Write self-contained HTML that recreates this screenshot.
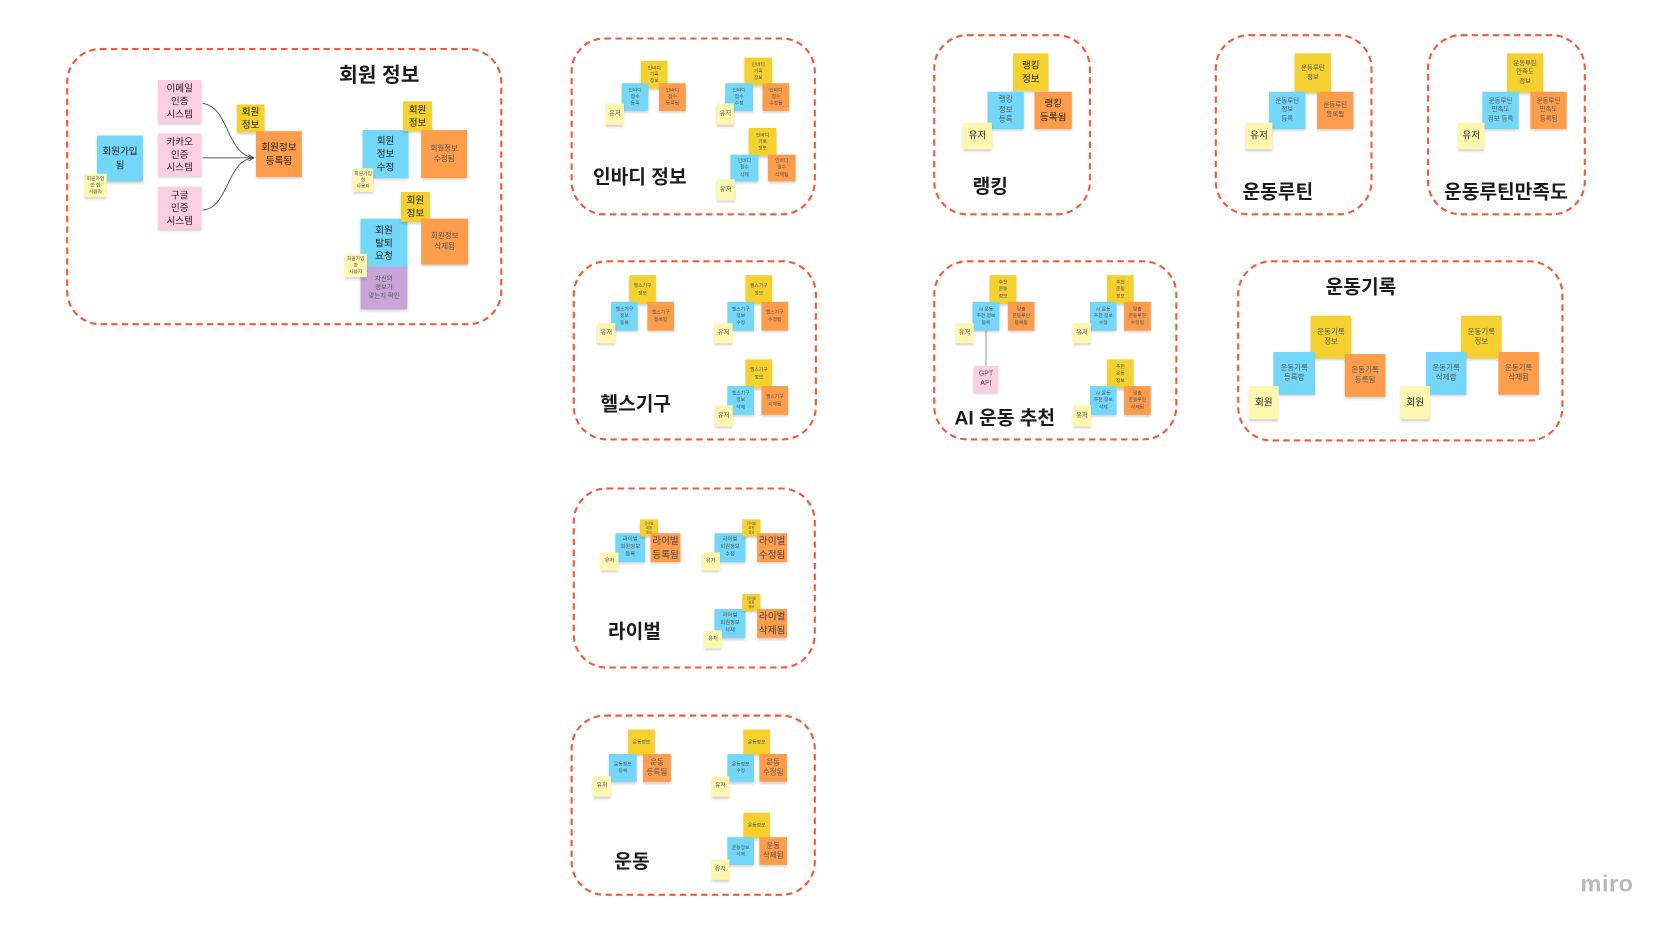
<!DOCTYPE html>
<html><head><meta charset="utf-8">
<style>
html,body{margin:0;padding:0;background:#fff;width:1673px;height:933px;overflow:hidden}
#w{position:absolute;left:0;top:0;width:1560px;height:870px;transform:scale(1.0665);transform-origin:0 0;font-family:"Liberation Sans","Noto Sans CJK KR",sans-serif}
.f{position:absolute;border:2px dashed #f25a3c;border-radius:32px;box-sizing:border-box}
.t{position:absolute;font-weight:bold;color:#1a1a1a;white-space:nowrap;font-size:18px}
.s{position:absolute;display:flex;align-items:center;justify-content:center;text-align:center;font-size:4.5px;line-height:1.35;color:#555;box-shadow:0 2px 2px rgba(0,0,0,.18);box-sizing:border-box;overflow:hidden}
.y{background:#f4d12f}.b{background:#72d7f8}.o{background:#fd9d4b}.p{background:#fdcde0}.l{background:#fff7b0}.v{background:#c9a5d7}
.m{font-size:9px;color:#222}.n{font-size:7px;color:#555}
</style></head><body><div id="w">

<!-- 회원 정보 -->
<div class="f" style="left:62px;top:45px;width:409px;height:260px"></div>
<div class="t" style="left:318px;top:56px;font-size:19px">회원 정보</div>
<svg style="position:absolute;left:0;top:0" width="560" height="340"><g fill="none" stroke="#444" stroke-width="0.8">
<path d="M190 97 C215 100,212 145,238 148"/><path d="M190 148 L238 148"/><path d="M190 197 C215 195,212 150,238 148"/><path d="M233 145 L238 148 L233 151"/></g></svg>
<div class="s p m" style="left:148px;top:75px;width:41px;height:40px">이메일<br>인증<br>시스템</div>
<div class="s p m" style="left:148px;top:125px;width:41px;height:40px">카카오<br>인증<br>시스템</div>
<div class="s p m" style="left:148px;top:175px;width:41px;height:40px">구글<br>인증<br>시스템</div>
<div class="s b m" style="left:91px;top:127px;width:43px;height:43px">회원가입<br>됨</div>
<div class="s l" style="left:79px;top:163px;width:21px;height:22px">회원가입<br>안 한<br>사용자</div>
<div class="s y m" style="left:222px;top:98px;width:26px;height:26px">회원<br>정보</div>
<div class="s o m" style="left:240px;top:123px;width:43px;height:43px">회원정보<br>등록됨</div>
<div class="s b m" style="left:340px;top:122px;width:43px;height:45px">회원<br>정보<br>수정</div>
<div class="s y m" style="left:378px;top:95px;width:27px;height:28px">회원<br>정보</div>
<div class="s o n" style="left:395px;top:122px;width:43px;height:45px">회원정보<br>수정됨</div>
<div class="s l" style="left:331px;top:158px;width:19px;height:22px">회원가입<br>한<br>사용자</div>
<div class="s b m" style="left:338px;top:205px;width:44px;height:46px">회원<br>탈퇴<br>요청</div>
<div class="s y m" style="left:376px;top:180px;width:27px;height:28px">회원<br>정보</div>
<div class="s v n" style="left:338px;top:250px;width:44px;height:40px;font-size:6px">자신의<br>정보가<br>맞는지 확인</div>
<div class="s o n" style="left:395px;top:205px;width:44px;height:43px">회원정보<br>삭제됨</div>
<div class="s l" style="left:323px;top:238px;width:21px;height:22px">회원가입<br>한<br>사용자</div>

<!-- 인바디 -->
<div class="f" style="left:535px;top:35px;width:230px;height:167px"></div>
<div class="t" style="left:556px;top:152px">인바디 정보</div>
<div class="s y" style="left:601px;top:57px;width:25px;height:26px">인바디<br>기록<br>정보</div>
<div class="s b" style="left:583px;top:78px;width:25px;height:26px">인바디<br>점수<br>등록</div>
<div class="s o" style="left:618px;top:78px;width:25px;height:26px">인바디<br>점수<br>등록됨</div>
<div class="s l n" style="left:568px;top:97px;width:17px;height:20px;font-size:6px">유저</div>
<div class="s y" style="left:698px;top:54px;width:26px;height:26px">인바디<br>기록<br>정보</div>
<div class="s b" style="left:680px;top:78px;width:26px;height:26px">인바디<br>점수<br>수정</div>
<div class="s o" style="left:715px;top:78px;width:25px;height:26px">인바디<br>점수<br>수정됨</div>
<div class="s l n" style="left:672px;top:97px;width:16px;height:20px;font-size:6px">유저</div>
<div class="s y" style="left:702px;top:120px;width:26px;height:26px">인바디<br>기록<br>정보</div>
<div class="s b" style="left:685px;top:145px;width:26px;height:25px">인바디<br>점수<br>삭제</div>
<div class="s o" style="left:720px;top:145px;width:26px;height:25px">인바디<br>점수<br>삭제됨</div>
<div class="s l n" style="left:672px;top:168px;width:17px;height:20px;font-size:6px">유저</div>

<!-- 랭킹 -->
<div class="f" style="left:875px;top:32px;width:148px;height:170px"></div>
<div class="t" style="left:912px;top:161px">랭킹</div>
<div class="s y m" style="left:950px;top:50px;width:33px;height:35px">랭킹<br>정보</div>
<div class="s b n" style="left:926px;top:86px;width:34px;height:35px">랭킹<br>정보<br>등록</div>
<div class="s o m" style="left:970px;top:86px;width:35px;height:35px">랭킹<br>등록됨</div>
<div class="s l m" style="left:903px;top:115px;width:27px;height:25px">유저</div>

<!-- 운동루틴 -->
<div class="f" style="left:1139px;top:32px;width:148px;height:170px"></div>
<div class="t" style="left:1165px;top:166px">운동루틴</div>
<div class="s y" style="left:1214px;top:50px;width:34px;height:37px;font-size:6px">운동루틴<br>정보</div>
<div class="s b" style="left:1190px;top:86px;width:34px;height:35px;font-size:6px">운동루틴<br>정보<br>등록</div>
<div class="s o" style="left:1235px;top:86px;width:34px;height:35px;font-size:6px">운동루틴<br>등록됨</div>
<div class="s l m" style="left:1168px;top:115px;width:25px;height:25px">유저</div>

<!-- 운동루틴만족도 -->
<div class="f" style="left:1338px;top:32px;width:149px;height:170px"></div>
<div class="t" style="left:1354px;top:166px">운동루틴만족도</div>
<div class="s y" style="left:1413px;top:50px;width:34px;height:37px;font-size:6px">운동루틴<br>만족도<br>정보</div>
<div class="s b" style="left:1390px;top:86px;width:34px;height:35px;font-size:6px">운동루틴<br>만족도<br>정보 등록</div>
<div class="s o" style="left:1435px;top:86px;width:34px;height:35px;font-size:6px">운동루틴<br>만족도<br>등록됨</div>
<div class="s l m" style="left:1367px;top:115px;width:25px;height:25px">유저</div>

<!-- 헬스기구 -->
<div class="f" style="left:537px;top:244px;width:229px;height:169px"></div>
<div class="t" style="left:563px;top:365px">헬스기구</div>
<div class="s y" style="left:590px;top:258px;width:25px;height:27px">헬스기구<br>정보</div>
<div class="s b" style="left:573px;top:283px;width:25px;height:27px">헬스기구<br>정보<br>등록</div>
<div class="s o" style="left:607px;top:283px;width:25px;height:27px">헬스기구<br>등록됨</div>
<div class="s l n" style="left:560px;top:303px;width:17px;height:19px;font-size:6px">유저</div>
<div class="s y" style="left:699px;top:258px;width:25px;height:27px">헬스기구<br>정보</div>
<div class="s b" style="left:682px;top:283px;width:25px;height:27px">헬스기구<br>정보<br>수정</div>
<div class="s o" style="left:714px;top:283px;width:25px;height:27px">헬스기구<br>수정됨</div>
<div class="s l n" style="left:670px;top:303px;width:17px;height:19px;font-size:6px">유저</div>
<div class="s y" style="left:699px;top:337px;width:25px;height:27px">헬스기구<br>정보</div>
<div class="s b" style="left:682px;top:362px;width:25px;height:27px">헬스기구<br>정보<br>삭제</div>
<div class="s o" style="left:714px;top:362px;width:25px;height:27px">헬스기구<br>삭제됨</div>
<div class="s l n" style="left:670px;top:380px;width:17px;height:20px;font-size:6px">유저</div>

<!-- AI -->
<div class="f" style="left:875px;top:244px;width:229px;height:169px"></div>
<div class="t" style="left:895px;top:378px">AI 운동 추천</div>
<div style="position:absolute;left:924px;top:310px;width:1px;height:33px;background:#999"></div>
<div class="s y" style="left:928px;top:258px;width:25px;height:27px">추천<br>운동<br>정보</div>
<div class="s b" style="left:912px;top:283px;width:25px;height:27px">AI 운동<br>추천 정보<br>등록</div>
<div class="s o" style="left:945px;top:283px;width:25px;height:27px">맞춤<br>운동루틴<br>등록됨</div>
<div class="s l n" style="left:896px;top:303px;width:17px;height:19px;font-size:6px">유저</div>
<div class="s p n" style="left:913px;top:343px;width:23px;height:25px;font-size:6.5px">GPT<br>API</div>
<div class="s y" style="left:1038px;top:258px;width:25px;height:27px">추천<br>운동<br>정보</div>
<div class="s b" style="left:1022px;top:283px;width:25px;height:27px">AI 운동<br>추천 정보<br>수정</div>
<div class="s o" style="left:1054px;top:283px;width:25px;height:27px">맞춤<br>운동루틴<br>수정됨</div>
<div class="s l n" style="left:1006px;top:303px;width:17px;height:19px;font-size:6px">유저</div>
<div class="s y" style="left:1038px;top:337px;width:25px;height:27px">추천<br>운동<br>정보</div>
<div class="s b" style="left:1022px;top:362px;width:25px;height:27px">AI 운동<br>추천 정보<br>삭제</div>
<div class="s o" style="left:1054px;top:362px;width:25px;height:27px">맞춤<br>운동루틴<br>삭제됨</div>
<div class="s l n" style="left:1006px;top:380px;width:17px;height:20px;font-size:6px">유저</div>

<!-- 운동기록 -->
<div class="f" style="left:1160px;top:244px;width:306px;height:170px"></div>
<div class="t" style="left:1243px;top:255px">운동기록</div>
<div class="s y n" style="left:1229px;top:296px;width:38px;height:40px">운동기록<br>정보</div>
<div class="s b n" style="left:1194px;top:330px;width:39px;height:40px">운동기록<br>등록함</div>
<div class="s o n" style="left:1261px;top:332px;width:38px;height:40px">운동기록<br>등록됨</div>
<div class="s l m" style="left:1171px;top:362px;width:28px;height:31px">회원</div>
<div class="s y n" style="left:1370px;top:296px;width:38px;height:40px">운동기록<br>정보</div>
<div class="s b n" style="left:1337px;top:330px;width:38px;height:40px">운동기록<br>삭제함</div>
<div class="s o n" style="left:1405px;top:330px;width:38px;height:40px">운동기록<br>삭제됨</div>
<div class="s l m" style="left:1313px;top:362px;width:28px;height:31px">회원</div>

<!-- 라이벌 -->
<div class="f" style="left:537px;top:457px;width:228px;height:170px"></div>
<div class="t" style="left:570px;top:578px">라이벌</div>
<div class="s b" style="left:577px;top:500px;width:28px;height:27px;font-size:5px">라이벌<br>회원정보<br>등록</div>
<div class="s y" style="left:600px;top:487px;width:17px;height:16px;font-size:3px">라이벌<br>회원<br>정보</div>
<div class="s o m" style="left:610px;top:500px;width:28px;height:27px;color:#444">라이벌<br>등록됨</div>
<div class="s l" style="left:563px;top:518px;width:17px;height:17px;font-size:5px">유저</div>
<div class="s b" style="left:670px;top:500px;width:29px;height:27px;font-size:5px">라이벌<br>회원정보<br>수정</div>
<div class="s y" style="left:696px;top:487px;width:17px;height:16px;font-size:3px">라이벌<br>회원<br>정보</div>
<div class="s o m" style="left:710px;top:500px;width:28px;height:27px;color:#444">라이벌<br>수정됨</div>
<div class="s l" style="left:658px;top:518px;width:17px;height:17px;font-size:5px">유저</div>
<div class="s b" style="left:670px;top:571px;width:29px;height:27px;font-size:5px">라이벌<br>회원정보<br>삭제</div>
<div class="s y" style="left:696px;top:557px;width:17px;height:16px;font-size:3px">라이벌<br>회원<br>정보</div>
<div class="s o m" style="left:710px;top:571px;width:28px;height:27px;color:#444">라이벌<br>삭제됨</div>
<div class="s l" style="left:660px;top:591px;width:17px;height:17px;font-size:5px">유저</div>

<!-- 운동 -->
<div class="f" style="left:535px;top:670px;width:230px;height:170px"></div>
<div class="t" style="left:576px;top:794px">운동</div>
<div class="s y" style="left:589px;top:684px;width:25px;height:24px">운동정보</div>
<div class="s b" style="left:571px;top:707px;width:26px;height:26px">운동정보<br>등록</div>
<div class="s o n" style="left:603px;top:707px;width:26px;height:26px">운동<br>등록됨</div>
<div class="s l" style="left:556px;top:728px;width:17px;height:19px;font-size:5.5px">유저</div>
<div class="s y" style="left:697px;top:684px;width:25px;height:24px">운동정보</div>
<div class="s b" style="left:682px;top:707px;width:25px;height:26px">운동정보<br>수정</div>
<div class="s o n" style="left:712px;top:707px;width:26px;height:26px">운동<br>수정됨</div>
<div class="s l" style="left:667px;top:728px;width:17px;height:19px;font-size:5.5px">유저</div>
<div class="s y" style="left:697px;top:762px;width:25px;height:24px">운동정보</div>
<div class="s b" style="left:682px;top:785px;width:25px;height:26px">운동정보<br>삭제</div>
<div class="s o n" style="left:712px;top:785px;width:26px;height:26px">운동<br>삭제됨</div>
<div class="s l" style="left:667px;top:806px;width:17px;height:19px;font-size:5.5px">유저</div>

<div style="position:absolute;left:1482px;top:816px;font-size:22px;color:#b8b8c0;font-weight:bold;letter-spacing:0.5px">miro</div>
</div></body></html>
